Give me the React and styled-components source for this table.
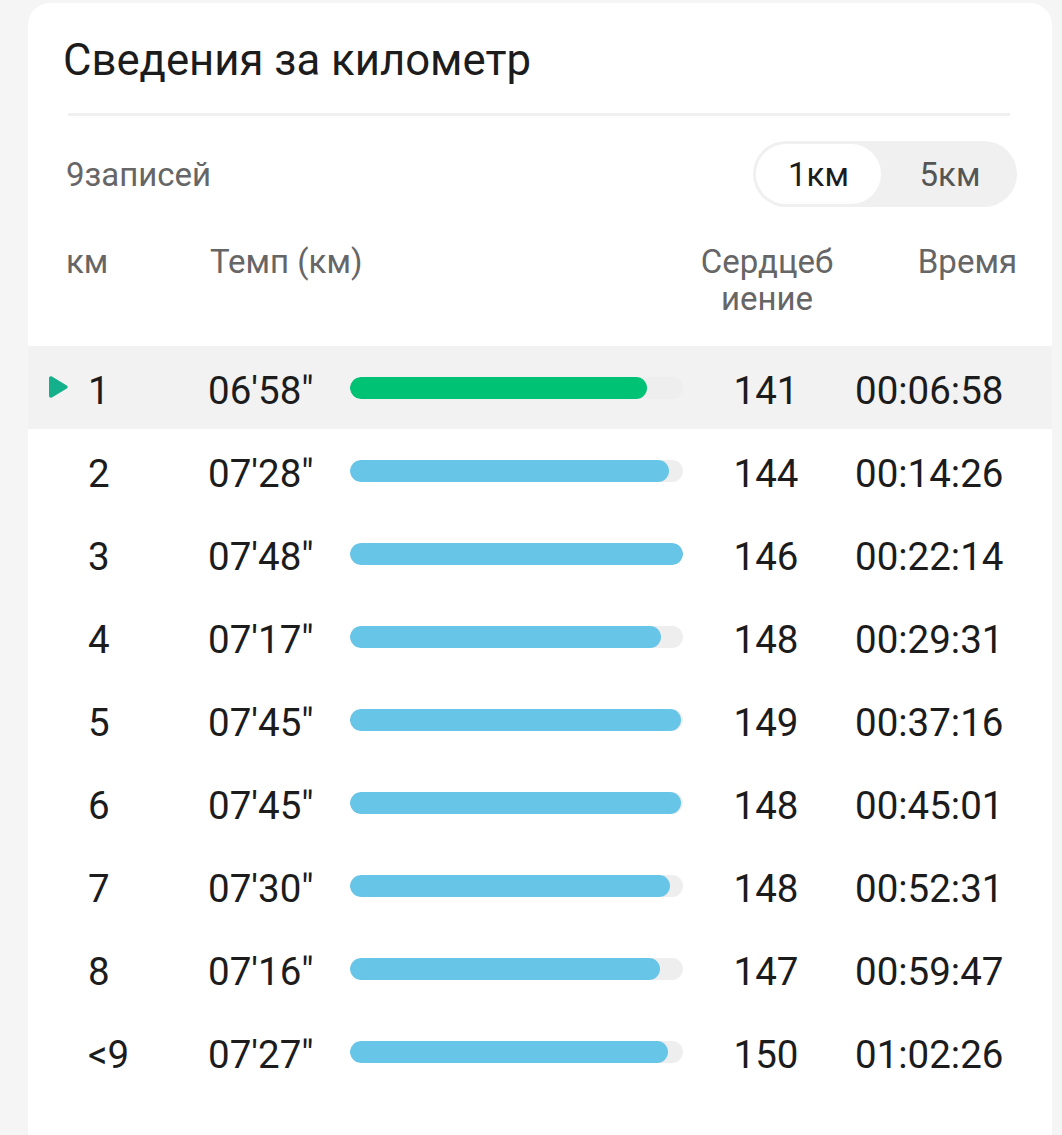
import React from "react";
import styled, { createGlobalStyle } from "styled-components";

const GlobalStyle = createGlobalStyle`
  body {
    margin: 0;
    background: #f5f5f5;
    font-family: Roboto, "Noto Sans", sans-serif;
  }
`;

const laps = [
  { km: "1", pace: "06'58\"", sec: 418, hr: 141, time: "00:06:58", active: true },
  { km: "2", pace: "07'28\"", sec: 448, hr: 144, time: "00:14:26" },
  { km: "3", pace: "07'48\"", sec: 468, hr: 146, time: "00:22:14" },
  { km: "4", pace: "07'17\"", sec: 437, hr: 148, time: "00:29:31" },
  { km: "5", pace: "07'45\"", sec: 465, hr: 149, time: "00:37:16" },
  { km: "6", pace: "07'45\"", sec: 465, hr: 148, time: "00:45:01" },
  { km: "7", pace: "07'30\"", sec: 450, hr: 148, time: "00:52:31" },
  { km: "8", pace: "07'16\"", sec: 436, hr: 147, time: "00:59:47" },
  { km: "<9", pace: "07'27\"", sec: 447, hr: 150, time: "01:02:26" },
];

function KmSplits() {
  const maxSec = Math.max(...laps.map((l) => l.sec));

  return (
    <Page>
      <GlobalStyle />
      <Card>
        <Head>
          <Title>Сведения за километр</Title>
          <Divider />
          <Toolbar>
            <Count>9записей</Count>
            <Toggle>
              <ToggleItem active>1км</ToggleItem>
              <ToggleItem>5км</ToggleItem>
            </Toggle>
          </Toolbar>
          <Columns>
            <ColLabel>км</ColLabel>
            <ColLabel>Темп (км)</ColLabel>
            <HeartLabel>Сердцебиение</HeartLabel>
            <TimeLabel>Время</TimeLabel>
          </Columns>
        </Head>

        {laps.map((lap) => (
          <Row key={lap.km} active={lap.active}>
            <Marker>{lap.active && <Play />}</Marker>
            <Cell>{lap.km}</Cell>
            <Cell>{lap.pace}</Cell>
            <Track>
              <Fill
                active={lap.active}
                style={{ width: `${(lap.sec / maxSec) * 100}%` }}
              />
            </Track>
            <HeartCell>{lap.hr}</HeartCell>
            <Cell>{lap.time}</Cell>
          </Row>
        ))}
        <Bottom />
      </Card>
    </Page>
  );
}

const Play = () => (
  <svg width="22" height="24" viewBox="0 0 22 24">
    <path
      d="M2 3.2 C2 1.6 3.6 0.8 4.9 1.6 L19.8 10.4 C21 11.2 21 12.8 19.8 13.6 L4.9 22.4 C3.6 23.2 2 22.4 2 20.8 Z"
      fill="#14b08c"
    />
  </svg>
);

export const Page = styled.div`
  padding: 3px 10px 0 28px;
  height: 1135px;
  box-sizing: border-box;
  overflow: hidden;
`;

export const Card = styled.div`
  width: 1024px;
  background: #ffffff;
  border-radius: 22px 22px 0 0;
  overflow: hidden;
`;

export const Head = styled.div`
  padding: 0 42px 0 38px;
`;

export const Title = styled.h1`
  margin: 0 0 0 -3px;
  padding-top: 31px;
  font-size: 43.7px;
  font-weight: 400;
  color: #1c1c1c;
  line-height: 52px;
`;

export const Divider = styled.div`
  height: 3px;
  background: #f0f0f0;
  margin: 27px 0 0 2px;
`;

export const Toolbar = styled.div`
  display: flex;
  align-items: center;
  justify-content: space-between;
  margin-top: 25px;
  margin-right: -7px;
`;

export const Count = styled.span`
  font-size: 33px;
  color: #666666;
`;

export const Toggle = styled.div`
  display: flex;
  width: 264px;
  height: 66px;
  padding: 3px;
  box-sizing: border-box;
  border-radius: 33px;
  background: #f0f0f0;
`;

export const ToggleItem = styled.div`
  flex: ${(props) => (props.active ? "0 0 125px" : "1")};
  display: flex;
  align-items: center;
  justify-content: center;
  padding-left: ${(props) => (props.active ? "0" : "5px")};
  border-radius: 30px;
  font-size: 33px;
  background: ${(props) => (props.active ? "#ffffff" : "transparent")};
  color: ${(props) => (props.active ? "#1c1c1c" : "#555555")};
`;

export const Columns = styled.div`
  display: grid;
  grid-template-columns: 144px 1fr 140px 180px;
  align-items: start;
  margin-top: 36px;
  margin-right: -7px;
  height: 103px;
  font-size: 33px;
  color: #666666;
  line-height: 37px;
`;

export const ColLabel = styled.span``;

export const HeartLabel = styled.span`
  width: 140px;
  text-align: center;
  word-break: break-all;
  margin-right: 20px;
`;

export const TimeLabel = styled.span`
  text-align: right;
`;

export const Row = styled.div`
  display: grid;
  grid-template-columns: 60px 120px 142px 333px 172px 1fr;
  align-items: center;
  height: 83px;
  background: ${(props) => (props.active ? "#f2f2f2" : "#ffffff")};
  font-size: 38.5px;
  color: #1c1c1c;
`;

export const Marker = styled.div`
  display: flex;
  justify-content: flex-end;
  padding-right: 19px;
  margin-top: -2px;
`;

export const Cell = styled.span`
  white-space: nowrap;
  padding-top: 5px;
`;

export const HeartCell = styled.span`
  text-align: center;
  padding: 5px 6px 0 0;
`;

export const Track = styled.div`
  height: 22px;
  border-radius: 11px;
  background: #eeeeee;
  overflow: hidden;
`;

export const Fill = styled.div`
  height: 100%;
  border-radius: 11px;
  background: ${(props) => (props.active ? "#00c274" : "#67c5e8")};
`;

export const Bottom = styled.div`
  height: 60px;
`;

export default KmSplits;
